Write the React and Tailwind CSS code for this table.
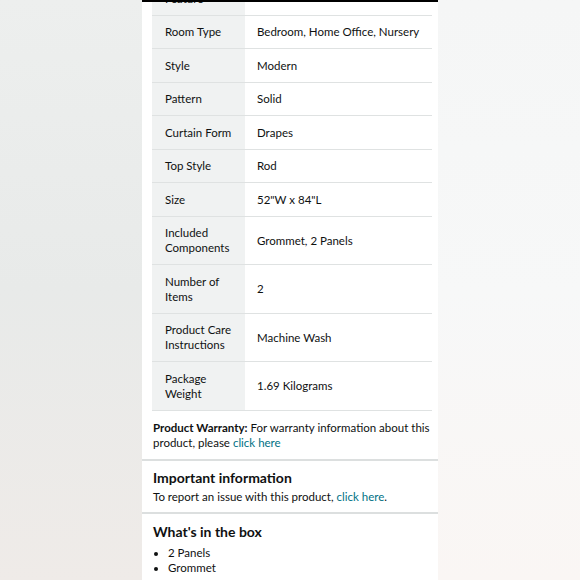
import React from "react";

const rows = [
  ["Special Feature", "Blackout"],
  ["Room Type", "Bedroom, Home Office, Nursery"],
  ["Style", "Modern"],
  ["Pattern", "Solid"],
  ["Curtain Form", "Drapes"],
  ["Top Style", "Rod"],
  ["Size", "52\"W x 84\"L"],
  ["Included Components", "Grommet, 2 Panels"],
  ["Number of Items", "2"],
  ["Product Care Instructions", "Machine Wash"],
  ["Package Weight", "1.69 Kilograms"],
];

export default function App() {
  return (
    <div
      className="flex h-[580px] w-[580px] overflow-hidden text-[#0f1111]"
      style={{ fontFamily: "Lato, Roboto, sans-serif" }}
    >
      <div className="w-[142px] h-full bg-linear-to-b from-[#edefee] via-[#e8eae9] to-[#efebe8]" />
      <div className="w-[296px] h-[578px] bg-white border-t-2 border-black overflow-hidden">
        <div className="-mt-[35px]">
          <div className="pl-[10px] pr-[6px]">
            <div className="border-b border-[#dfe2e2]">
              {rows.map(([k, v], i) => (
                <div
                  key={k}
                  className={
                    "flex text-[11.5px] leading-[15px] " +
                    (i > 0 ? "border-t border-[#dfe2e2]" : "")
                  }
                >
                  <div className="w-[93px] shrink-0 bg-[#f0f2f2] pl-[13px] pr-1 py-[8.75px] flex items-center">
                    {k}
                  </div>
                  <div className="flex-1 pl-3 py-[8.75px] flex items-center whitespace-nowrap">
                    {v}
                  </div>
                </div>
              ))}
            </div>
            <p className="text-[11.5px] leading-[15px] pt-[9px] pb-[9px] pl-px">
              <span className="font-bold">Product Warranty:</span> For warranty information about this product, please{" "}
              <span className="text-[#007185]">click here</span>
            </p>
          </div>
          <div className="border-t-2 border-[#dcdfdf] pl-[11px] pr-[6px] pt-[7px] pb-[8px]">
            <h2 className="text-[14px] leading-[19px] font-bold">Important information</h2>
            <p className="text-[11.5px] leading-[15px] mt-[2px]">
              To report an issue with this product,{" "}
              <span className="text-[#007185]">click here</span>.
            </p>
          </div>
          <div className="border-t-2 border-[#dcdfdf] pl-[11px] pr-[6px] pt-[8px]">
            <h2 className="text-[14px] leading-[19px] font-bold">What's in the box</h2>
            <ul className="text-[11.5px] leading-[15px] mt-[4px] list-disc pl-[15px]">
              <li>2 Panels</li>
              <li>Grommet</li>
            </ul>
          </div>
        </div>
      </div>
      <div className="w-[142px] h-full bg-linear-to-b from-[#f5f6f6] via-[#f7f8f8] to-[#faf6f4]" />
    </div>
  );
}
